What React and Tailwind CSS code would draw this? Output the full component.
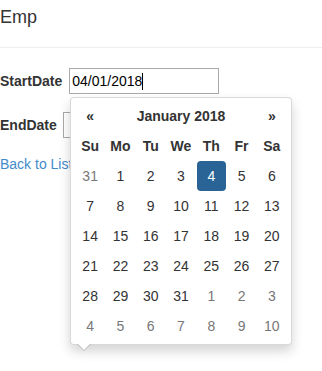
const DOW = ['Su', 'Mo', 'Tu', 'We', 'Th', 'Fr', 'Sa'];

// six weeks shown by the picker, old/new flag for greyed days
const WEEKS = [
  [[31, 1], [1], [2], [3], [4], [5], [6]],
  [[7], [8], [9], [10], [11], [12], [13]],
  [[14], [15], [16], [17], [18], [19], [20]],
  [[21], [22], [23], [24], [25], [26], [27]],
  [[28], [29], [30], [31], [1, 1], [2, 1], [3, 1]],
  [[4, 1], [5, 1], [6, 1], [7, 1], [8, 1], [9, 1], [10, 1]],
];

function DatePicker() {
  return (
    <div className="absolute left-[70px] top-[97px] w-[222px] h-[248px] bg-white border border-[rgba(0,0,0,0.15)] rounded-[4px] shadow-[0_6px_12px_rgba(0,0,0,0.175)] px-[4px] pt-[3px] pb-[5px]">
      <div className="grid grid-cols-7 text-center text-[14px] leading-[30px]">
        <div className="font-bold">«</div>
        <div className="col-span-5 font-bold">January 2018</div>
        <div className="font-bold">»</div>

        {DOW.map(d => (
          <div key={d} className="font-bold">{d}</div>
        ))}

        {WEEKS.flat().map(([n, muted], i) => {
          const active = !muted && n === 4;
          return (
            <div key={i} className="flex justify-center">
              <div
                className={`w-[29px] h-[30px] rounded-[4px] ${
                  active ? 'bg-[#2a6496] text-white' : muted ? 'text-[#777]' : ''
                }`}
              >
                {n}
              </div>
            </div>
          );
        })}
      </div>

      {/* little arrow under the widget */}
      <div className="absolute left-[6px] bottom-[-7px] w-0 h-0 border-x-[7px] border-x-transparent border-t-[7px] border-t-[rgba(0,0,0,0.2)]" />
      <div className="absolute left-[7px] bottom-[-6px] w-0 h-0 border-x-[6px] border-x-transparent border-t-[6px] border-t-white" />
    </div>
  );
}

export default function App() {
  return (
    <div className="relative w-[322px] h-[371px] bg-white text-[#333] text-[14px] overflow-hidden font-['Liberation_Sans',Arial,sans-serif]">
      <h4 className="mt-[7px] text-[18px] leading-[20px]">Emp</h4>
      <hr className="mt-[20px] border-0 border-t border-[#eee]" />

      <div className="mt-[20px] flex items-center h-[26px]">
        <label className="font-bold">StartDate</label>
        <div className="ml-[7px] w-[150px] h-[26px] border border-[#a9a9a9] px-[2px] flex items-center text-black">
          04/01/2018
          <span className="inline-block w-px h-[17px] bg-black" />
        </div>
      </div>

      <div className="mt-[18px] flex items-center h-[26px]">
        <label className="font-bold">EndDate</label>
        <div className="ml-[6px] w-[150px] h-[26px] border border-[#a9a9a9]" />
      </div>

      <div className="mt-[16px] leading-[20px]">
        <a className="text-[#428bca]">Back to List</a>
      </div>

      <DatePicker />
    </div>
  );
}
